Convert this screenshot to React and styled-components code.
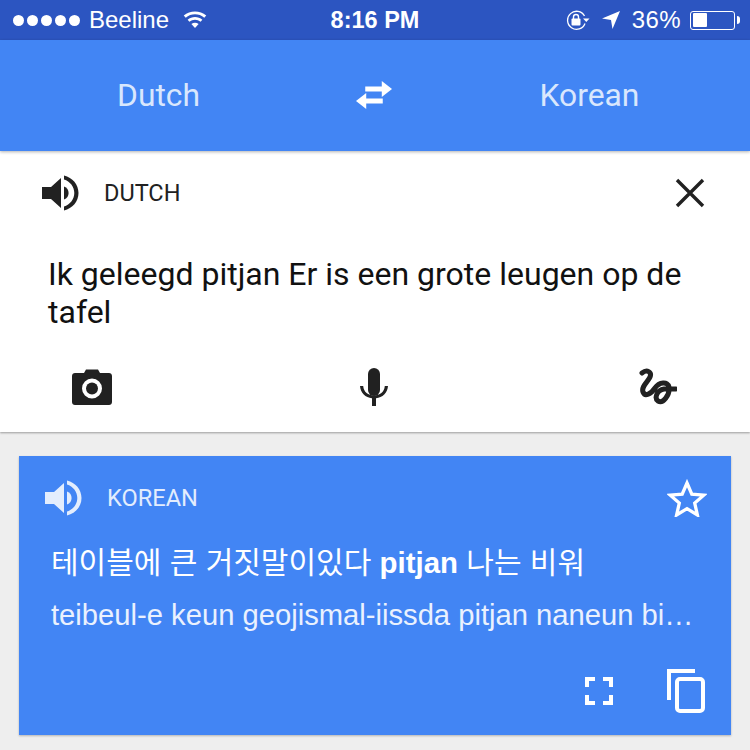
import React from 'react'
import styled, { createGlobalStyle } from 'styled-components'

const Global = createGlobalStyle`
  html, body { margin: 0; padding: 0; background: #eeeeee; }
  body { font-family: "Liberation Sans", Arial, sans-serif; }
`

const Page = styled.div`
  width: 750px;
  height: 750px;
  overflow: hidden;
  background: #eeeeee;
  display: flex;
  flex-direction: column;
`

const StatusBar = styled.div`
  height: 40px;
  background: #2c55c1;
  color: #fff;
  display: grid;
  grid-template-columns: 1fr auto 1fr;
  align-items: center;
  font-size: 24px;
  padding: 0 15px;
`

const StatusLeft = styled.div`
  display: flex;
  align-items: center;
  margin-left: -2px;
`

const StatusRight = styled.div`
  display: flex;
  align-items: center;
  justify-content: flex-end;
`

const Dots = styled.div`
  display: flex;
  gap: 3px;
  margin-right: 9px;
`

const Dot = styled.span`
  width: 11px;
  height: 11px;
  border-radius: 50%;
  background: #fff;
`

const Clock = styled.div`
  font-weight: 700;
  font-size: 23.5px;
`

const Percent = styled.span`
  margin-right: 9px;
  letter-spacing: 0.4px;
`

const Battery = styled.div`
  width: 45px;
  height: 19px;
  border: 1.5px solid #fff;
  border-radius: 3px;
  padding: 1.5px;
  box-sizing: border-box;
  position: relative;
  &::after {
    content: '';
    position: absolute;
    right: -6px;
    top: 4px;
    width: 3px;
    height: 8px;
    background: #fff;
    border-radius: 0 3px 3px 0;
  }
`

const BatteryFill = styled.div`
  height: 100%;
  background: #fff;
  border-radius: 1px;
`

const Header = styled.div`
  height: 111px;
  background: #4285f4;
  display: grid;
  grid-template-columns: 317px 1fr 317px;
  align-items: center;
  color: #d9e7fd;
  font-family: Roboto, sans-serif;
  font-size: 31.8px;
  box-shadow: 0 1px 3px rgba(0, 0, 0, 0.3);
  position: relative;
  z-index: 2;
`

const Lang = styled.div`
  text-align: center;
  padding-bottom: 1px;
  padding-right: ${p => (p.$right ? '4px' : '0')};
`

const Swap = styled.div`
  display: flex;
  justify-content: center;
  padding-bottom: 2px;
`

const InputPanel = styled.div`
  height: 281px;
  background: #fff;
  display: flex;
  flex-direction: column;
  box-shadow: 0 1px 2px rgba(0, 0, 0, 0.35);
  position: relative;
  z-index: 1;
`

const PanelHead = styled.div`
  display: flex;
  align-items: center;
  height: 84px;
  padding: 0 45px 0 41px;
`

const LangLabel = styled.div`
  font-family: Roboto, sans-serif;
  font-size: ${p => (p.$light ? '23.6px' : '23.5px')};
  margin-left: 25px;
  flex: 1;
  color: ${p => (p.$light ? '#e3edfd' : '#212121')};
`

const SourceText = styled.div`
  font-family: Roboto, sans-serif;
  font-size: 32px;
  line-height: 38px;
  color: #111;
  padding: 0 48px;
  height: 113px;
  margin-top: 20px;
`

const Tools = styled.div`
  display: flex;
  justify-content: space-between;
  align-items: center;
  padding: 0 73px 0 72px;
`

const Card = styled.div`
  margin: 24px 19px 0;
  height: 279px;
  background: #4285f4;
  box-shadow: 0 1px 2px rgba(0, 0, 0, 0.25);
  display: flex;
  flex-direction: column;
`

const CardHead = styled.div`
  display: flex;
  align-items: center;
  height: 84px;
  padding: 0 24px 0 25px;
`

const Translated = styled.div`
  color: #fff;
  font-family: "Liberation Sans", "Noto Sans CJK KR", sans-serif;
  font-size: 30px;
  line-height: 40px;
  padding: 3px 32px 0;
  white-space: nowrap;
  b { font-weight: 700; font-size: 29.4px; }
`

const Roman = styled.div`
  color: #eaf1fe;
  font-size: 29.2px;
  line-height: 34px;
  padding: 0 32px;
  margin-top: 15px;
  white-space: nowrap;
`

const CardActions = styled.div`
  margin-top: auto;
  padding: 0 26px 22px 0;
  display: flex;
  justify-content: flex-end;
  align-items: flex-end;
  gap: 54px;
`

const Icon = styled.svg`
  display: block;
  flex: none;
  margin: 0 ${p => p.$mr || 0}px ${p => p.$mb || 0}px ${p => p.$ml || 0}px;
`

function Speaker({ color }) {
  return (
    <Icon width="38" height="38" viewBox="0 0 38 38" fill={color}>
      <path d="M1 13h9l10-9v30l-10-9H1z" />
      <path d="M23 12.5c3 1.2 4.6 3.6 4.6 6.5s-1.600 5.300-4.600 6.500z" />
      <path d="M23 1.500c8.500 2 14.500 9 14.500 17.500s-6 15.500-14.500 17.500v-4c6-1.800 10.300-7.200 10.300-13.500S29 7.300 23 5.500z" />
    </Icon>
  )
}

export default function App() {
  return (
    <Page>
      <Global />
      <StatusBar>
        <StatusLeft>
          <Dots>{[0, 1, 2, 3, 4].map(i => <Dot key={i} />)}</Dots>
          Beeline
          <Icon width="24" height="18" viewBox="0 0 26 20" fill="#fff" $ml={14}>
            <path d="M13 19l-4-4.600c2.300-1.900 5.700-1.900 8 0z" />
            <path d="M6.800 12l-2-2.200c4.700-4 11.700-4 16.400 0l-2 2.200c-3.600-3-8.800-3-12.400 0z" />
            <path d="M2.700 7.400L.5 5c7-6 18-6 25 0l-2.200 2.400c-5.900-5-14.700-5-20.600 0z" />
          </Icon>
        </StatusLeft>
        <Clock>8:16 PM</Clock>
        <StatusRight>
          <Icon width="24" height="20" viewBox="0 0 24 20" fill="none" $mr={12}>
            <path d="M19 13.500A9 9 0 1 1 18.500 6" stroke="#fff" strokeWidth="1.300" />
            <path d="M17 8.500h6.500l-3.200 3.500z" fill="#fff" />
            <rect x="5.500" y="8.500" width="9" height="7" rx="1" fill="#fff" />
            <path d="M7.500 9V7a2.500 2.500 0 0 1 5 0v2" stroke="#fff" strokeWidth="1.400" />
          </Icon>
          <Icon width="18" height="18" viewBox="0 0 18 18" fill="#fff" $mr={12}>
            <path d="M18 0L10.500 18 9 9 0 7.500z" />
          </Icon>
          <Percent>36%</Percent>
          <Battery><BatteryFill style={{ width: '36%' }} /></Battery>
        </StatusRight>
      </StatusBar>

      <Header>
        <Lang>Dutch</Lang>
        <Swap>
          <Icon width="36" height="28" viewBox="0.500 0 37 28" fill="#fff" $mr={2} preserveAspectRatio="none">
            <path d="M27 0l10.500 8L27 16v-5.500H10v-5h17z" />
            <path d="M11 12L.5 20 11 28v-5.500h17v-5H11z" />
          </Icon>
        </Swap>
        <Lang $right>Korean</Lang>
      </Header>

      <InputPanel>
        <PanelHead>
          <Speaker color="#212121" />
          <LangLabel>DUTCH</LangLabel>
          <Icon width="30" height="30" viewBox="0 0 30 30" stroke="#212121" strokeWidth="3.400">
            <path d="M2 2l26 26M28 2L2 28" />
          </Icon>
        </PanelHead>
        <SourceText>Ik geleegd pitjan Er is een grote leugen op de tafel</SourceText>
        <Tools>
          <Icon width="40" height="37" viewBox="0 0 40 37" fill="#212121">
            <path fillRule="evenodd" d="M12 4l2-3.500h12L28 4h9c1.700 0 3 1.300 3 3v26c0 1.700-1.300 3-3 3H3c-1.700 0-3-1.300-3-3V7c0-1.700 1.300-3 3-3zM20 9.500a10 10 0 1 0 0 20 10 10 0 0 0 0-20z" />
            <circle cx="20" cy="19.500" r="6" />
          </Icon>
          <Icon width="28" height="38" viewBox="0 0 28 38" fill="#212121" $mr={3}>
            <rect x="8" y="0" width="12" height="28" rx="6" />
            <path d="M0 18h3.200c.5 6 5 9.500 10.800 9.500s10.300-3.500 10.800-9.500H28c-.5 7-5.500 11.500-12 12.300V38h-4v-7.700C5.500 29.500.5 25 0 18z" />
          </Icon>
          <Icon width="38" height="38" viewBox="0 0 38 38" fill="none" stroke="#212121" strokeWidth="5" strokeLinecap="round">
            <path d="M3 5C8 1 13 4 11 9 9 14 2 18 4 24 6 29 12 26 16 20 20 14 29 13 30 19 31 27 24 36 19 33 15 30 18 22 25 21L37 21" />
          </Icon>
        </Tools>
      </InputPanel>

      <Card>
        <CardHead>
          <Speaker color="#e3edfd" />
          <LangLabel $light>KOREAN</LangLabel>
          <Icon width="40" height="38" viewBox="0 0 40 38" fill="none" stroke="#fff" strokeWidth="3.300">
            <path d="M20 4l4.800 11.200 12 1-9.100 7.900 2.700 11.900L20 29.700 9.600 36l2.700-11.900-9.100-7.900 12-1z" />
          </Icon>
        </CardHead>
        <Translated>테이블에 큰 거짓말이있다 <b>pitjan</b> 나는 비워</Translated>
        <Roman>teibeul-e keun geojismal-iissda pitjan naneun bi…</Roman>
        <CardActions>
          <Icon width="28" height="28" viewBox="0 0 28 28" fill="none" stroke="#fff" strokeWidth="4" $mb={8}>
            <path d="M2 10V2H10M18 2H26V10M26 18V26H18M10 26H2V18" />
          </Icon>
          <Icon width="38" height="44" viewBox="0 0 38 44" fill="none" stroke="#fff" strokeWidth="4">
            <path d="M2 31V2H28" />
            <rect x="10" y="10" width="26" height="32" rx="3" />
          </Icon>
        </CardActions>
      </Card>
    </Page>
  )
}
